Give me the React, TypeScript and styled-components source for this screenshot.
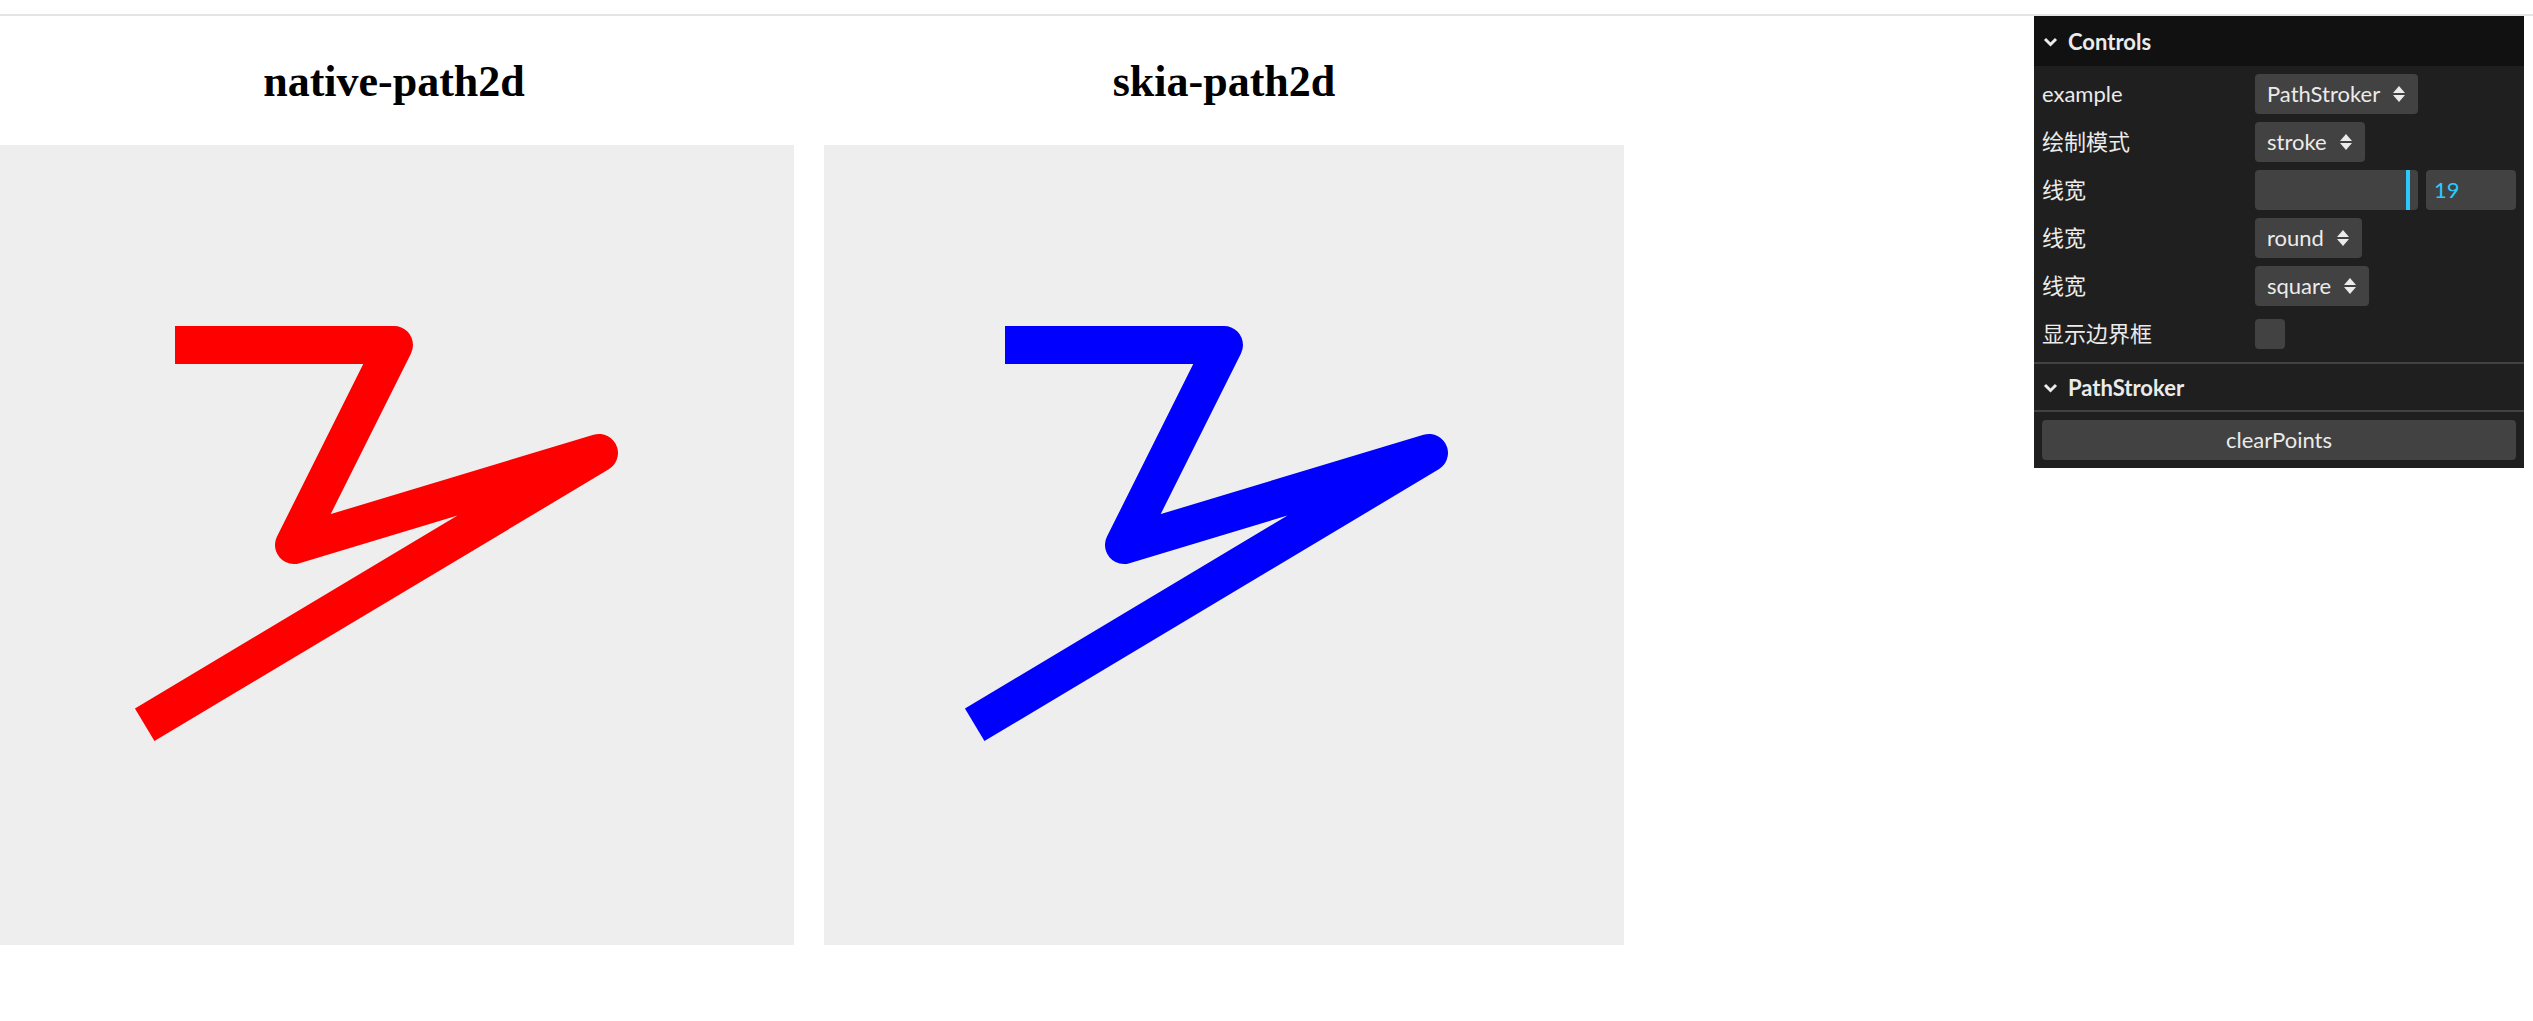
import React from "react";
import styled, { createGlobalStyle } from "styled-components";

const GlobalStyle = createGlobalStyle`
  html, body {
    margin: 0;
    padding: 0;
    background: #ffffff;
  }
  body {
    font-family: "Liberation Serif", serif;
  }
`;

const Page = styled.div`
  position: relative;
  min-height: 1021px;
  overflow: hidden;
`;

const TopBar = styled.div`
  height: 14px;
  border-bottom: 2px solid #e4e4e4;
`;

const Stage = styled.div`
  display: flex;
  gap: 30px;
  margin-left: -6px;
`;

const Column = styled.div`
  width: 800px;
  display: flex;
  flex-direction: column;
  align-items: center;
`;

const Heading = styled.h2`
  margin: 41px 0 38px;
  font-family: "Liberation Serif", serif;
  font-weight: 700;
  font-size: 44px;
  line-height: 50px;
  color: #000;
`;

const Canvas = styled.div`
  width: 800px;
  height: 800px;
  background: #eeeeee;

  svg {
    display: block;
  }
`;

// lil-gui style panel
const Gui = styled.div`
  position: absolute;
  top: 16px;
  right: 9px;
  width: 490px;
  background: #1f1f1f;
  color: #ebebeb;
  font-family: Lato, "Noto Sans CJK SC", sans-serif;
  font-size: 22px;
  line-height: 1;
`;

const Title = styled.div<{ nested?: boolean }>`
  height: 50px;
  box-sizing: border-box;
  display: flex;
  align-items: center;
  gap: 10px;
  padding: 2px 9px 0;
  font-weight: 700;
  background: ${({ nested }) => (nested ? "#1f1f1f" : "#111111")};
  border-top: ${({ nested }) => (nested ? "2px solid #424242" : "none")};
  border-bottom: ${({ nested }) => (nested ? "2px solid #424242" : "none")};
`;

const Children = styled.div`
  padding-top: 8px;
`;

const Row = styled.div`
  height: 40px;
  display: flex;
  align-items: center;
  padding: 0 8px;
  margin-bottom: 8px;
`;

const Name = styled.div`
  width: 213px;
  flex-shrink: 0;
  white-space: nowrap;
`;

const Select = styled.div`
  height: 40px;
  box-sizing: border-box;
  display: inline-flex;
  align-items: center;
  gap: 13px;
  padding: 0 13px 0 12px;
  background: #424242;
  border-radius: 4px;
`;

const Slider = styled.div`
  flex: 1;
  height: 40px;
  background: #424242;
  border-radius: 4px;
  overflow: hidden;
`;

const Fill = styled.div`
  height: 100%;
  border-right: 4px solid #2cc9ff;
`;

const NumberBox = styled.div`
  width: 90px;
  height: 40px;
  box-sizing: border-box;
  margin-left: 8px;
  padding-left: 8px;
  display: flex;
  align-items: center;
  background: #424242;
  border-radius: 4px;
  color: #2cc9ff;
`;

const Check = styled.div`
  width: 30px;
  height: 30px;
  background: #424242;
  border-radius: 4px;
`;

const Button = styled.div`
  flex: 1;
  height: 40px;
  display: flex;
  align-items: center;
  justify-content: center;
  background: #424242;
  border-radius: 4px;
`;

const Chevron = () => (
  <svg width="15" height="10" viewBox="0 0 15 10">
    <polyline points="2,2 7.5,7.5 13,2" fill="none" stroke="#ebebeb" strokeWidth="3" />
  </svg>
);

const UpDown = () => (
  <svg width="12" height="16" viewBox="0 0 12 16">
    <polygon points="6,0 12,7 0,7" fill="#ebebeb" />
    <polygon points="0,9 12,9 6,16" fill="#ebebeb" />
  </svg>
);

const points = "200,200 400,200 300,400 605,308 167,570";

const Stroke = ({ color }: { color: string }) => (
  <svg width="800" height="800" viewBox="0 0 800 800">
    <polyline
      points={points}
      fill="none"
      stroke={color}
      strokeWidth="38"
      strokeLinecap="square"
      strokeLinejoin="round"
    />
  </svg>
);

const options: Array<[string, string]> = [
  ["example", "PathStroker"],
  ["绘制模式", "stroke"],
];

export default function App() {
  const lineWidth = 19;
  const fillPct = ((lineWidth - 1) / 19.4) * 100;

  return (
    <Page>
      <GlobalStyle />
      <TopBar />
      <Stage>
        <Column>
          <Heading>native-path2d</Heading>
          <Canvas>
            <Stroke color="#ff0000" />
          </Canvas>
        </Column>
        <Column>
          <Heading>skia-path2d</Heading>
          <Canvas>
            <Stroke color="#0000ff" />
          </Canvas>
        </Column>
      </Stage>

      <Gui>
        <Title>
          <Chevron />
          Controls
        </Title>
        <Children>
          {options.map(([name, value]) => (
            <Row key={name}>
              <Name>{name}</Name>
              <Select>
                {value}
                <UpDown />
              </Select>
            </Row>
          ))}
          <Row>
            <Name>线宽</Name>
            <Slider>
              <Fill style={{ width: `${fillPct}%` }} />
            </Slider>
            <NumberBox>{lineWidth}</NumberBox>
          </Row>
          <Row>
            <Name>线宽</Name>
            <Select>
              round
              <UpDown />
            </Select>
          </Row>
          <Row>
            <Name>线宽</Name>
            <Select>
              square
              <UpDown />
            </Select>
          </Row>
          <Row>
            <Name>显示边界框</Name>
            <Check />
          </Row>
        </Children>
        <Title nested>
          <Chevron />
          PathStroker
        </Title>
        <Children>
          <Row>
            <Button>clearPoints</Button>
          </Row>
        </Children>
      </Gui>
    </Page>
  );
}
